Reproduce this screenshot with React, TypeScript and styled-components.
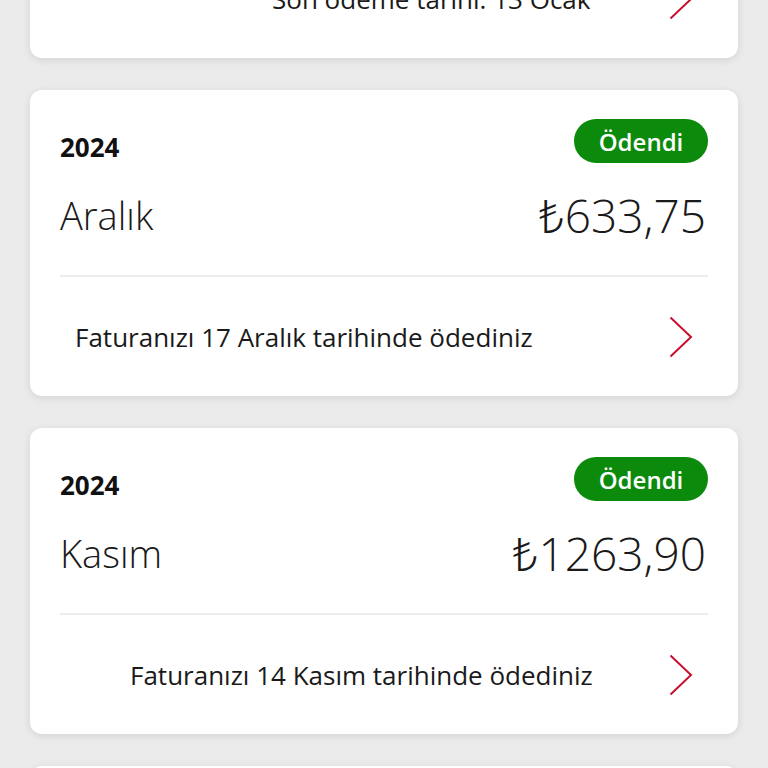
import React from 'react';
import styled, { createGlobalStyle } from 'styled-components';

const GlobalStyle = createGlobalStyle`
  html, body {
    margin: 0;
    padding: 0;
    background: #ebebeb;
    font-family: 'Open Sans', 'Noto Sans', sans-serif;
    color: #1a1a1a;
  }
`;

const Viewport = styled.div`
  height: 100vh;
  overflow: hidden;
`;

const List = styled.div`
  display: flex;
  flex-direction: column;
  gap: 32px;
  padding: 0 30px;
  /* list is scrolled: first card is mostly above the fold */
  margin-top: -248px;
`;

const Card = styled.div`
  background: #fff;
  border-radius: 12px;
  box-shadow: 0 2px 8px rgba(0, 0, 0, 0.1);
  padding: 29px 30px 0 30px;
  height: 306px;
  box-sizing: border-box;
  display: flex;
  flex-direction: column;
`;

const TopRow = styled.div`
  display: flex;
  justify-content: space-between;
  align-items: center;
  height: 44px;
`;

const Year = styled.span`
  font-size: 26px;
  font-weight: 700;
  padding-top: 12px;
  color: #111;
`;

const Badge = styled.span<{ $paid: boolean }>`
  display: inline-flex;
  align-items: center;
  justify-content: center;
  height: 44px;
  width: 134px;
  border-radius: 22px;
  background: ${({ $paid }) => ($paid ? '#0c8a0c' : '#e60000')};
  color: #fff;
  font-size: 24px;
  font-weight: 600;
`;

const MainRow = styled.div`
  display: flex;
  justify-content: space-between;
  align-items: center;
  margin-top: 16px;
  height: 72px;
`;

const Month = styled.span`
  font-size: 38px;
  font-weight: 300;
  font-stretch: 88%;
`;

const Amount = styled.span`
  font-size: 46px;
  font-weight: 300;
  font-stretch: 88%;
  margin-right: 2px;
`;

const Divider = styled.div`
  height: 2px;
  background: #ececec;
  margin-top: 24px;
`;

const Footer = styled.div`
  flex: 1;
  display: flex;
  align-items: center;
  justify-content: space-between;
  padding-right: 15px;
`;

const FooterText = styled.span<{ $indent: number }>`
  margin-left: ${({ $indent }) => $indent}px;
  font-size: 26px;
  font-weight: 400;
  font-stretch: 88%;
  color: #1a1a1a;
`;

const Chevron = () => (
  <svg width="24" height="42" viewBox="0 0 24 42" fill="none">
    <polyline
      points="1.5,1.5 22,21 1.5,40.5"
      stroke="#c8102e"
      strokeWidth="2"
      strokeLinejoin="miter"
    />
  </svg>
);

type Bill = {
  year: string;
  month: string;
  amount: string;
  paid: boolean;
  note: string;
  indent: number;
};

const bills: Bill[] = [
  { year: '2025', month: 'Ocak', amount: '₺712,40', paid: false, note: 'Son ödeme tarihi: 13 Ocak', indent: 212 },
  { year: '2024', month: 'Aralık', amount: '₺633,75', paid: true, note: 'Faturanızı 17 Aralık tarihinde ödediniz', indent: 15 },
  { year: '2024', month: 'Kasım', amount: '₺1263,90', paid: true, note: 'Faturanızı 14 Kasım tarihinde ödediniz', indent: 70 },
  { year: '2024', month: 'Ekim', amount: '₺598,20', paid: true, note: 'Faturanızı 15 Ekim tarihinde ödediniz', indent: 70 },
];

export default function App() {
  return (
    <Viewport>
      <GlobalStyle />
      <List>
        {bills.map((b) => (
          <Card key={b.month}>
            <TopRow>
              <Year>{b.year}</Year>
              <Badge $paid={b.paid}>{b.paid ? 'Ödendi' : 'Ödenmedi'}</Badge>
            </TopRow>
            <MainRow>
              <Month>{b.month}</Month>
              <Amount>{b.amount}</Amount>
            </MainRow>
            <Divider />
            <Footer>
              <FooterText $indent={b.indent}>{b.note}</FooterText>
              <Chevron />
            </Footer>
          </Card>
        ))}
      </List>
    </Viewport>
  );
}
